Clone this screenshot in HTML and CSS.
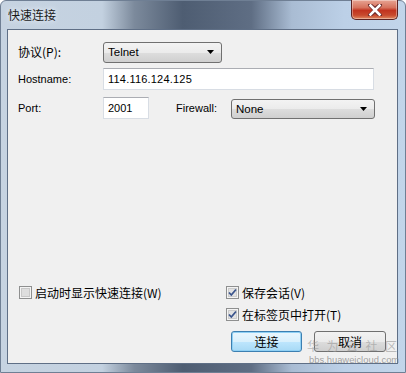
FILE: index.html
```html
<!DOCTYPE html>
<html lang="zh-CN">
<head>
  <meta charset="UTF-8" />
  <title>快速连接</title>
  <link rel="stylesheet" href="styles.css">
</head>
<body>
  <div class="window">
    <div class="titlebar">
      <span class="title">快速连接</span>
      <div class="close-btn">
        <svg width="16" height="12" viewBox="0 0 16 12">
          <path d="M3 1 L8 5 L13 1 M3 11 L8 7 L13 11 M8 6 L3 1 M8 6 L13 1" stroke="#6a2a2a" stroke-width="4" fill="none" stroke-linecap="round"/>
          <path d="M3.5 1.5 L12.5 10.5 M12.5 1.5 L3.5 10.5" stroke="#fff" stroke-width="2.6" fill="none" stroke-linecap="square"/>
        </svg>
      </div>
    </div>

    <div class="client">
      <div class="row">
        <label class="cap">协议(P):</label>
        <div class="combo combo-protocol">
          <span>Telnet</span>
          <svg class="arrow" width="7" height="4" viewBox="0 0 7 4"><path d="M0 0 H7 L3.5 4 Z" fill="#000"/></svg>
        </div>
      </div>

      <div class="row row-host">
        <label class="cap">Hostname:</label>
        <div class="field field-host">114.116.124.125</div>
      </div>

      <div class="row row-port">
        <label class="cap">Port:</label>
        <div class="field field-port">2001</div>
        <label class="cap cap-firewall">Firewall:</label>
        <div class="combo combo-firewall">
          <span>None</span>
          <svg class="arrow" width="7" height="4" viewBox="0 0 7 4"><path d="M0 0 H7 L3.5 4 Z" fill="#000"/></svg>
        </div>
      </div>

      <div class="spacer"></div>

      <div class="options">
        <div class="opt opt-left">
          <svg class="check" width="13" height="13" viewBox="0 0 13 13">
            <rect x="0.5" y="0.5" width="12" height="12" fill="#f4f4f4" stroke="#8e8f8f"/>
            <rect x="2.5" y="2.5" width="8" height="8" fill="#dedede" stroke="#c8c8c8"/>
          </svg>
          <span>启动时显示快速连接(W)</span>
        </div>
        <div class="opt-right">
          <div class="opt">
            <svg class="check" width="13" height="13" viewBox="0 0 13 13">
              <rect x="0.5" y="0.5" width="12" height="12" fill="#f4f4f4" stroke="#8e8f8f"/>
              <rect x="2.5" y="2.5" width="8" height="8" fill="#e2e2e2" stroke="#cccccc"/>
              <path d="M3 6.5 L5.3 9 L10 3.5" stroke="#3a548c" stroke-width="1.8" fill="none"/>
            </svg>
            <span>保存会话(V)</span>
          </div>
          <div class="opt opt-second">
            <svg class="check" width="13" height="13" viewBox="0 0 13 13">
              <rect x="0.5" y="0.5" width="12" height="12" fill="#f4f4f4" stroke="#8e8f8f"/>
              <rect x="2.5" y="2.5" width="8" height="8" fill="#e2e2e2" stroke="#cccccc"/>
              <path d="M3 6.5 L5.3 9 L10 3.5" stroke="#3a548c" stroke-width="1.8" fill="none"/>
            </svg>
            <span>在标签页中打开(T)</span>
          </div>
        </div>
      </div>

      <div class="buttons">
        <div class="btn btn-default">连接</div>
        <div class="btn">取消</div>
      </div>
    </div>

    <div class="watermark">
      <div class="wm-cn">华为云社区</div>
      <div class="wm-url">bbs.huaweicloud.com</div>
    </div>
  </div>
</body>
</html>
```

FILE: styles.css
```css
body {
  margin: 0;
  width: 406px;
  height: 373px;
  overflow: hidden;
  font-family: "Liberation Sans", Arial, sans-serif;
}
.window {
  position: relative;
  height: 373px;
  display: flex;
  flex-direction: column;
  background: linear-gradient(90deg, #c6d3e1 0%, #c3d1e0 25%, #7c8a9c 33%, #4e5d72 45%, #5f6e84 62%, #a9bcd3 72%, #bcd0e7 85%, #c2d5ea 100%);
  border: 1px solid #6f7f94;
  border-radius: 6px 6px 0 0;
  box-sizing: border-box;
}
.titlebar {
  height: 28px;
  display: flex;
  align-items: flex-start;
  padding-left: 7px;
}
.title {
  font-family: "Noto Sans CJK SC", sans-serif;
  font-size: 12px;
  line-height: 28px;
  color: #1a1a1a;
  text-shadow: 0 0 6px #e6edf5, 0 0 4px #e6edf5;
}
.close-btn {
  margin-left: auto;
  margin-right: 7px;
  width: 45px;
  height: 19px;
  margin-top: -1px;
  border: 1px solid #5c2222;
  border-top: none;
  border-radius: 0 0 5px 5px;
  background: linear-gradient(180deg, #e7a493 0%, #d6725d 40%, #c1331f 55%, #c84a2e 80%, #e08a62 100%);
  display: flex;
  align-items: center;
  justify-content: center;
  box-shadow: inset 0 0 0 1px rgba(255, 255, 255, 0.35);
}
.client {
  flex: 1;
  margin: 0 7px 8px 6px;
  border: 1px solid #5f6f86;
  background: #f0f0f0;
  display: flex;
  flex-direction: column;
  padding: 11px 0 11px 0;
  font-size: 11px;
  color: #000;
}
.row {
  display: flex;
  align-items: center;
  padding-left: 10px;
}
.row-host {
  margin-top: 5px;
}
.row-port {
  margin-top: 7px;
  align-items: flex-end;
}
.cap {
  width: 85px;
  font-size: 11px;
  line-height: 22px;
  font-family: "Liberation Sans", "Noto Sans CJK SC", sans-serif;
}
.row:first-child .cap {
  font-family: "Noto Sans CJK SC", sans-serif;
  font-size: 12px;
}
.cap-firewall {
  width: 55px;
  margin-left: 27px;
}
.combo {
  box-sizing: border-box;
  height: 21px;
  border: 1px solid #707070;
  border-radius: 3px;
  background: linear-gradient(180deg, #f3f3f3 0%, #ebebeb 50%, #dddddd 51%, #cfcfcf 100%);
  display: flex;
  align-items: center;
  padding: 0 7px 0 4px;
  font-size: 11.5px;
}
.combo span {
  flex: 1;
}
.combo-protocol {
  width: 119px;
}
.combo-firewall {
  width: 144px;
  height: 20px;
}
.field {
  box-sizing: border-box;
  height: 22px;
  background: #fff;
  border: 1px solid #d8dde4;
  border-top-color: #abadb3;
  display: flex;
  align-items: center;
  padding-left: 4px;
  font-size: 11px;
}
.field-host {
  width: 271px;
  letter-spacing: 0.2px;
}
.field-port {
  width: 46px;
}
.spacer {
  flex: 1;
}
.options {
  display: flex;
  padding-left: 11px;
  font-family: "Noto Sans CJK SC", sans-serif;
  font-size: 12px;
}
.opt {
  display: flex;
  align-items: center;
  height: 16px;
  gap: 3px;
}
.opt-left {
  width: 207px;
}
.opt-second {
  margin-top: 6px;
}
.check {
  flex: none;
}
.buttons {
  display: flex;
  justify-content: flex-end;
  gap: 12px;
  padding-right: 11px;
  margin-top: 9px;
}
.btn {
  box-sizing: border-box;
  width: 72px;
  height: 21px;
  border: 1px solid #707070;
  border-radius: 3px;
  background: linear-gradient(180deg, #f2f2f2 0%, #ebebeb 50%, #dddddd 51%, #cfcfcf 100%);
  display: flex;
  align-items: center;
  justify-content: center;
  font-family: "Noto Sans CJK SC", sans-serif;
  font-size: 12px;
  position: relative;
  z-index: 0;
}
.btn-default {
  width: 71px;
  border-color: #3c7fb1;
  background: linear-gradient(180deg, #eaf6fd 0%, #d9f0fc 50%, #bee6fd 51%, #a7d9f5 100%);
  box-shadow: inset 0 0 0 1px #8fd0f4;
}
.watermark {
  position: absolute;
  left: 306px;
  top: 337px;
  color: rgba(150, 150, 150, 0.6);
  pointer-events: none;
  z-index: 1;
}
.wm-cn {
  font-family: "Noto Sans CJK SC", sans-serif;
  font-size: 12px;
  letter-spacing: 7.5px;
  line-height: 16px;
}
.wm-url {
  font-size: 9.4px;
  line-height: 11px;
  color: rgba(140, 140, 140, 0.8);
  margin-left: 2px;
}
```
